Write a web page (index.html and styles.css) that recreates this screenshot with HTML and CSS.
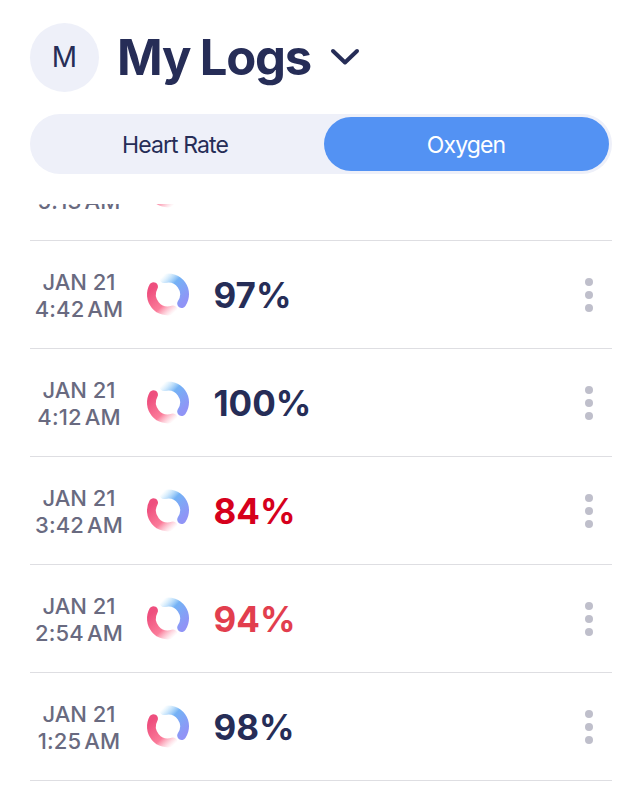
FILE: index.html
```html
<!DOCTYPE html>
<html lang="en">
<head>
    <meta charset="UTF-8">
    <meta name="viewport" content="width=device-width, initial-scale=1.0">
    <title>My Logs</title>
    <link rel="stylesheet" href="styles.css">
</head>
<body>
    <!-- Ring icon shared by all rows -->
    <svg class="defs" width="0" height="0">
        <defs>
            <linearGradient id="pink" gradientUnits="userSpaceOnUse" x1="8" y1="14" x2="30" y2="38">
                <stop offset="0" stop-color="#ee4f7e"/>
                <stop offset="0.6" stop-color="#fb7c9a"/>
                <stop offset="1" stop-color="#fbb0c0" stop-opacity="0"/>
            </linearGradient>
            <linearGradient id="blue" gradientUnits="userSpaceOnUse" x1="13" y1="7" x2="37" y2="30">
                <stop offset="0" stop-color="#a5dcfa" stop-opacity="0"/>
                <stop offset="0.4" stop-color="#74b2f5"/>
                <stop offset="1" stop-color="#9094f6"/>
            </linearGradient>
            <symbol id="ring" viewBox="0 0 44 44">
                <path d="M7.5 13.7A16.3 16.3 0 0 0 27 37" fill="none" stroke="url(#pink)" stroke-width="9" stroke-linecap="round"/>
                <path d="M18 5.6A16.3 16.3 0 0 1 35.7 30.5" fill="none" stroke="url(#blue)" stroke-width="9" stroke-linecap="round"/>
            </symbol>
        </defs>
    </svg>

    <header class="header">
        <div class="avatar">M</div>
        <h1 class="title">My Logs</h1>
        <svg class="chevron" width="30" height="20" viewBox="0 0 30 20">
            <path d="M3 4L15 15.5L27 4" fill="none" stroke="#262d57" stroke-width="4" stroke-linecap="round" stroke-linejoin="round"/>
        </svg>
    </header>

    <div class="tabs">
        <div class="tab">Heart Rate</div>
        <div class="tab active">Oxygen</div>
    </div>

    <div class="logs">
        <div class="row">
            <div class="date"><span>JAN 21</span><span class="time">5:13 AM</span></div>
            <svg class="ring"><use href="#ring"/></svg>
        </div>
        <div class="row">
            <div class="date"><span>JAN 21</span><span class="time">4:42 AM</span></div>
            <svg class="ring"><use href="#ring"/></svg>
            <div class="value">97%</div>
            <div class="menu"><i></i><i></i><i></i></div>
        </div>
        <div class="row">
            <div class="date"><span>JAN 21</span><span class="time">4:12 AM</span></div>
            <svg class="ring"><use href="#ring"/></svg>
            <div class="value">100%</div>
            <div class="menu"><i></i><i></i><i></i></div>
        </div>
        <div class="row">
            <div class="date"><span>JAN 21</span><span class="time">3:42 AM</span></div>
            <svg class="ring"><use href="#ring"/></svg>
            <div class="value danger">84%</div>
            <div class="menu"><i></i><i></i><i></i></div>
        </div>
        <div class="row">
            <div class="date"><span>JAN 21</span><span class="time">2:54 AM</span></div>
            <svg class="ring"><use href="#ring"/></svg>
            <div class="value warning">94%</div>
            <div class="menu"><i></i><i></i><i></i></div>
        </div>
        <div class="row">
            <div class="date"><span>JAN 21</span><span class="time">1:25 AM</span></div>
            <svg class="ring"><use href="#ring"/></svg>
            <div class="value">98%</div>
            <div class="menu"><i></i><i></i><i></i></div>
        </div>
    </div>
</body>
</html>
```

FILE: styles.css
```css
* {
    box-sizing: border-box;
}

body {
    margin: 0;
    padding: 23px 30px 0;
    height: 807px;
    overflow: hidden;
    background: #fff;
    color: #262d57;
    font-family: Inter, 'Liberation Sans', sans-serif;
}

.defs {
    display: block;
}

.header {
    display: flex;
    align-items: center;
    height: 68px;
}

.avatar {
    width: 69px;
    height: 69px;
    border-radius: 50%;
    background: #eef0f9;
    font-size: 28px;
    line-height: 69px;
    text-align: center;
}

.title {
    margin: 0 0 0 18px;
    padding-top: 2px;
    font-size: 49px;
    line-height: 68px;
    font-weight: 700;
    letter-spacing: -1.2px;
    word-spacing: -1px;
}

.chevron {
    margin-left: 19px;
}

.tabs {
    display: flex;
    width: 582px;
    height: 60px;
    margin-top: 23px;
    padding: 3px;
    border-radius: 30px;
    background: #eef0f9;
}

.tab {
    width: 291px;
    padding-right: 7px;
    font-size: 23px;
    line-height: 56px;
    text-align: center;
    letter-spacing: -0.9px;
}

.tab.active {
    width: 285px;
    height: 54px;
    padding-right: 1px;
    border-radius: 27px;
    background: #5392f3;
    color: #fff;
}

.logs {
    display: flex;
    flex-direction: column;
    justify-content: flex-end;
    width: 582px;
    height: 577px;
    margin-top: 30px;
    overflow: hidden;
}

.row {
    display: flex;
    flex: none;
    align-items: center;
    height: 108px;
    border-bottom: 1px solid #dedee2;
}

.date {
    display: flex;
    flex-direction: column;
    align-items: center;
    width: 98px;
    padding-top: 2px;
    color: #696a80;
    font-size: 22px;
    line-height: 27px;
    font-weight: 500;
}

.time {
    letter-spacing: 0.15px;
    word-spacing: -3px;
}

.ring {
    width: 44px;
    height: 44px;
    margin-left: 18px;
}

.value {
    margin-left: 23.5px;
    font-size: 35px;
    font-weight: 700;
}

.danger {
    color: #d6001c;
}

.warning {
    color: #e23e4e;
}

.menu {
    display: flex;
    flex-direction: column;
    gap: 5px;
    margin-left: auto;
    margin-right: 19px;
}

.menu i {
    width: 8px;
    height: 8px;
    border-radius: 50%;
    background: #bfbfcb;
}
```
